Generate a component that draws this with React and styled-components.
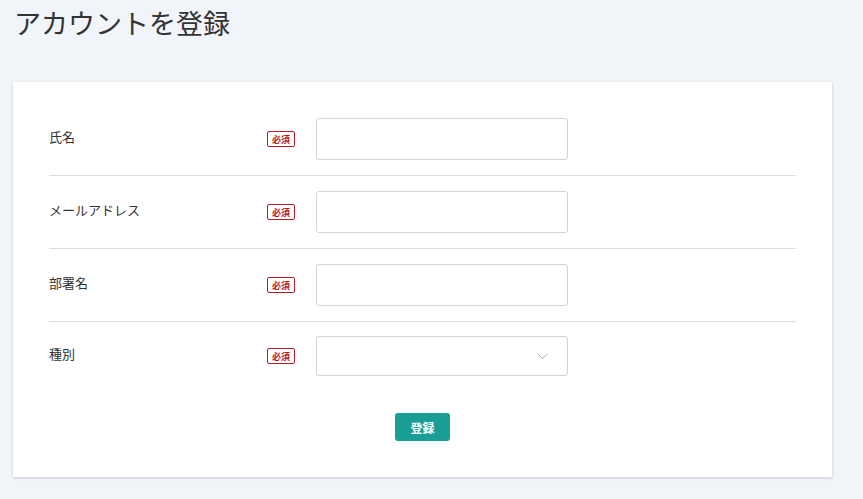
import React from "react";
import styled, { createGlobalStyle } from "styled-components";

const GlobalStyle = createGlobalStyle`
  body {
    margin: 0;
    background: #f1f4f9;
    font-family: "Noto Sans CJK JP", "Noto Sans", sans-serif;
    color: #333;
  }
`;

const Page = styled.div`
  padding: 4px 31px 22px 13px;
`;

const Title = styled.h1`
  margin: 0 0 0 1px;
  font-size: 27px;
  font-weight: 400;
  line-height: 38px;
  color: #333;
`;

const Card = styled.div`
  margin-top: 40px;
  background: #fff;
  box-shadow: 0 1px 3px rgba(0, 0, 0, 0.18);
  padding: 21px 36px 36px;
`;

const Row = styled.div`
  display: grid;
  grid-template-columns: 197px 28px 252px;
  column-gap: 21px;
  align-items: center;
  padding: ${(p) => (p.last ? "14px 0 15px" : "15px 0")};
  border-bottom: ${(p) => (p.last ? "none" : "1px solid #ddd")};
`;

const Label = styled.div`
  font-size: 13px;
  line-height: 18px;
  padding-bottom: 4px;
`;

const Badge = styled.span`
  display: inline-flex;
  align-items: center;
  justify-content: center;
  box-sizing: border-box;
  width: 28px;
  height: 16px;
  border: 1px solid #b71c25;
  border-radius: 2px;
  color: #b71c25;
  font-size: 9px;
  font-weight: 700;
  line-height: 1;
`;

const Input = styled.input`
  box-sizing: border-box;
  width: 252px;
  height: 42px;
  border: 1px solid #d3d3d3;
  border-radius: 3px;
  outline: none;
  padding: 0 12px;
  font: inherit;
`;

const SelectBox = styled.div`
  position: relative;
  box-sizing: border-box;
  width: 252px;
  height: 40px;
  border: 1px solid #d3d3d3;
  border-radius: 3px;
  svg {
    position: absolute;
    right: 19px;
    top: 16px;
  }
`;

const Actions = styled.div`
  display: flex;
  justify-content: center;
  padding-top: 22px;
`;

const Button = styled.button`
  width: 55px;
  height: 28px;
  border: none;
  border-radius: 3px;
  background: #1a9d94;
  color: #fff;
  font-family: inherit;
  font-size: 12px;
  font-weight: 700;
  cursor: pointer;
`;

const fields = ["氏名", "メールアドレス", "部署名"];

export default function App() {
  return (
    <>
      <GlobalStyle />
      <Page>
        <Title>アカウントを登録</Title>
        <Card>
          {fields.map((f) => (
            <Row key={f}>
              <Label>{f}</Label>
              <Badge>必須</Badge>
              <Input type="text" />
            </Row>
          ))}
          <Row last>
            <Label>種別</Label>
            <Badge>必須</Badge>
            <SelectBox>
              <svg width="11" height="7" viewBox="0 0 11 7">
                <path d="M0.5 0.8 L5.5 5.6 L10.5 0.8" fill="none" stroke="#a8a8a8" strokeWidth="1" />
              </svg>
            </SelectBox>
          </Row>
          <Actions>
            <Button>登録</Button>
          </Actions>
        </Card>
      </Page>
    </>
  );
}
